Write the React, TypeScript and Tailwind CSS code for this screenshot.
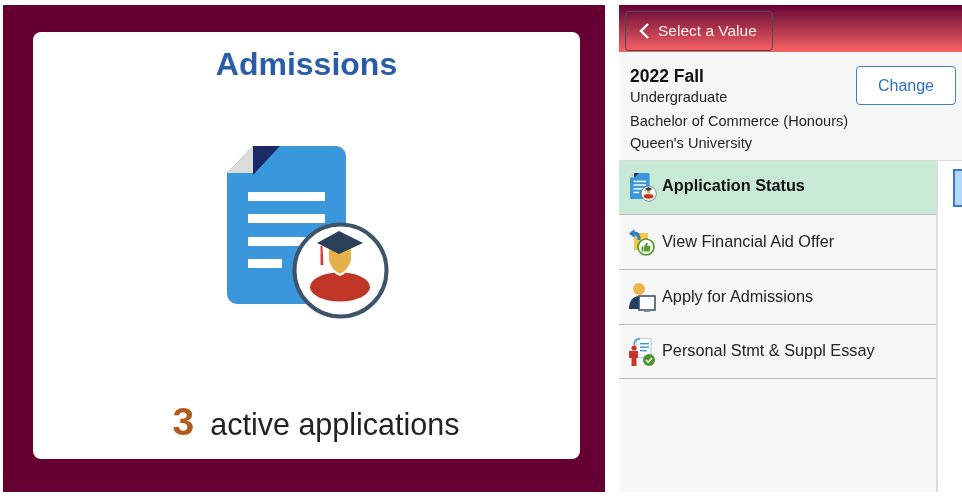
function AdmissionsIcon({ className }: { className: string }) {
  return (
    <svg viewBox="227 146 164 175" className={className}>
      <path d="M253 146H336a10 10 0 0 1 10 10V294a10 10 0 0 1 -10 10H237a10 10 0 0 1 -10 -10V173Z" fill="#3a97dc" />
      <path d="M253 146L227 173H253Z" fill="#dcdcdc" />
      <path d="M253 146H280L253 175Z" fill="#1b2a66" />
      <rect x="248" y="192" width="77" height="9" fill="#fff" />
      <rect x="248" y="214" width="77" height="9" fill="#fff" />
      <rect x="248" y="237" width="77" height="9" fill="#fff" />
      <rect x="248" y="259" width="34" height="9" fill="#fff" />
      <circle cx="340.5" cy="270.5" r="46" fill="#fff" stroke="#3e5468" strokeWidth="4" />
      <ellipse cx="340" cy="287" rx="30" ry="14.5" fill="#c03626" />
      <path d="M328 247H352V260C351 267 345 273 340 275C335 273 329 267 328 260Z" fill="#e5b04a" stroke="#fff" strokeWidth="2" />
      <path d="M317 243L339 231L363 243L339 254Z" fill="#2b4058" />
      <path d="M320.5 246V265H323.5L322.5 246Z" fill="#c8443a" />
    </svg>
  )
}

function FinancialIcon() {
  return (
    <svg viewBox="0 0 28 30" className="w-7 h-[30px]">
      <rect x="5" y="6" width="14" height="17" fill="#f1c84a" />
      <path d="M0 6.5L5.5 2V4.5C9.5 4.5 11.5 7.5 11.5 13H8.5C8.5 9.5 7.5 8.5 5.5 8.5V11Z" fill="#2f7fc4" />
      <circle cx="17" cy="20" r="8" fill="#fff" stroke="#5a9a35" strokeWidth="1.7" />
      <path d="M12.5 19.5H14.5V24.5H12.5ZM15 19.5L17.5 15.5L18.8 16.2L18.3 18.8H21.6L20.6 24.5H15Z" fill="#5a9a35" />
    </svg>
  )
}

function ApplyIcon() {
  return (
    <svg viewBox="0 0 28 30" className="w-7 h-[30px]">
      <circle cx="10" cy="7" r="6" fill="#eeb346" />
      <path d="M0 27C0 19 4 14 10 14C13 14 15 15 16 17V27Z" fill="#22405e" />
      <rect x="10" y="14" width="16" height="14" fill="#fff" stroke="#3e5468" strokeWidth="1.6" />
      <rect x="15" y="28" width="6" height="2" fill="#7f8a94" />
    </svg>
  )
}

function EssayIcon() {
  return (
    <svg viewBox="0 0 28 30" className="w-7 h-[30px]">
      <rect x="7" y="1.5" width="15" height="19" fill="#fff" stroke="#b9cfe2" strokeWidth="1.2" />
      <path d="M5 8C5 4 7 2 11 2" fill="none" stroke="#3a97dc" strokeWidth="1.4" />
      <rect x="11" y="6" width="9" height="1.4" fill="#3a97dc" />
      <rect x="11" y="9.5" width="9" height="1.4" fill="#3a97dc" />
      <rect x="11" y="13" width="7" height="1.4" fill="#3a97dc" />
      <circle cx="5" cy="11" r="2.6" fill="#c8352b" />
      <path d="M0 14H9V21H7.5V29H2.5V21H0Z" fill="#c8352b" />
      <circle cx="20" cy="23" r="6" fill="#4e9430" />
      <path d="M17 23L19.2 25.2L23 21" fill="none" stroke="#fff" strokeWidth="1.6" />
    </svg>
  )
}

const rows = [
  { label: 'View Financial Aid Offer', icon: <FinancialIcon />, height: 'h-[55px]' },
  { label: 'Apply for Admissions', icon: <ApplyIcon />, height: 'h-[55px]' },
  { label: 'Personal Stmt & Suppl Essay', icon: <EssayIcon />, height: 'h-[54px]' },
]

export default function App() {
  return (
    <div className="w-[962px] h-[497px] overflow-hidden bg-white flex pt-[5px] pb-[5px] pl-[3px] font-['Liberation_Sans',Arial,sans-serif]">
      {/* tile */}
      <div className="w-[602px] bg-[#660033] pt-[27px] pl-[30px]">
        <div className="w-[547px] h-[427px] bg-white rounded-[8px] flex flex-col items-center blur-[0.7px]">
          <h1 className="mt-[12px] text-[32px] leading-[40px] font-bold text-[#2a5ca8]">Admissions</h1>
          <AdmissionsIcon className="mt-[62px] ml-[4px] w-[164px] h-[175px]" />
          <div className="mt-[79px] ml-[19px] flex items-baseline">
            <span className="text-[39px] leading-[44px] font-bold text-[#b05a1c]">3</span>
            <span className="ml-[16px] text-[30.5px] leading-[44px] text-[#222]">active applications</span>
          </div>
        </div>
      </div>

      {/* side panel */}
      <div className="ml-[14px] flex-1 flex flex-col min-w-0 blur-[0.4px]">
        <div className="h-[47px] bg-gradient-to-b from-[#660033] to-[#f96464] pt-[6px] pl-[6px]">
          <button className="w-[148px] h-[40px] rounded-[4px] border border-[#4b4a58] flex items-center pl-[12px] text-[15.5px] text-[#fbeeee]">
            <svg viewBox="0 0 12 16" className="w-3 h-4">
              <path d="M10 1L3 8L10 15" fill="none" stroke="#fff" strokeWidth="2.4" />
            </svg>
            <span className="ml-[8px]">Select a Value</span>
          </button>
        </div>
        <div className="h-[109px] bg-[#f7f7f7] border-b border-[#d9d9d9] flex justify-between pl-[11px] pr-[6px]">
          <div className="pt-[14px] text-[14.6px] leading-[22px] text-[#222]">
            <div className="text-[17.5px] leading-[20px] font-bold text-[#111]">2022 Fall</div>
            <div>Undergraduate</div>
            <div className="mt-[2px]">Bachelor of Commerce (Honours)</div>
            <div>Queen's University</div>
          </div>
          <button className="mt-[14px] w-[100px] h-[39px] bg-white rounded-[4px] border border-[#3f7fd0] text-[16px] text-[#2c72c4]">Change</button>
        </div>
        <div className="flex-1 flex min-h-0">
          <div className="w-[319px] bg-[#f7f7f7] border-r-2 border-[#d8dde3] flex flex-col">
            <div className="h-[54px] bg-[#c8e9d6] border-b border-[#bdbdbd] flex items-center pl-[11px] text-[16.3px] font-bold text-[#111]">
              <AdmissionsIcon className="w-[27px] h-[29px] shrink-0" />
              <span className="ml-[5px] mb-[4px]">Application Status</span>
            </div>
            {rows.map((row) => (
              <div key={row.label} className={`${row.height} border-b border-[#bdbdbd] flex items-center pl-[10px] text-[16.3px] text-[#222]`}>
                <span className="w-7 h-[30px] shrink-0">{row.icon}</span>
                <span className="ml-[5px] mb-[2px]">{row.label}</span>
              </div>
            ))}
          </div>
          <div className="flex-1 pt-[8px] pl-[15px] overflow-hidden">
            <div className="w-[20px] h-[38px] border-2 border-[#3c78d0] bg-[#b3d7f8]" />
          </div>
        </div>
      </div>
    </div>
  )
}
